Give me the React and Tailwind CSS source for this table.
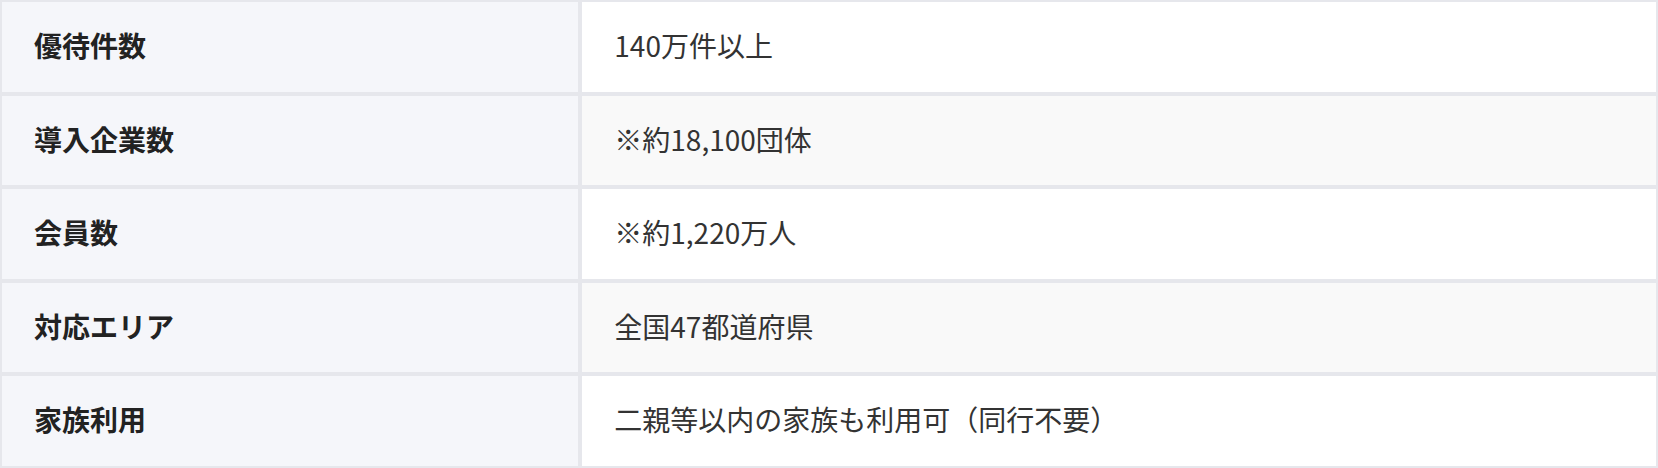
import React from "react";

const rows = [
  { label: "優待件数", value: "140万件以上" },
  { label: "導入企業数", value: "※約18,100団体" },
  { label: "会員数", value: "※約1,220万人" },
  { label: "対応エリア", value: "全国47都道府県" },
  { label: "家族利用", value: "二親等以内の家族も利用可（同行不要）" },
];

const App = () => {
  return (
    <div
      className="w-[1658px] bg-white"
      style={{ fontFamily: '"Noto Sans CJK JP", "Noto Sans", sans-serif' }}
    >
      <table className="w-full border-separate border-spacing-0 table-fixed">
        <tbody>
          {rows.map((row, index) => (
            <tr key={index}>
              <th className="w-[35%] border-2 border-[#e6e7ec] bg-[#f5f6fa] px-8 pt-[21px] pb-[23px] text-left text-[28px] leading-[45.6px] font-bold text-[#222222]">
                {row.label}
              </th>
              <td
                className={
                  index % 2 === 1
                    ? "border-2 border-[#e6e7ec] bg-[#f9f9f9] px-8 pt-[21px] pb-[23px] text-[28px] leading-[45.6px] text-[#333333]"
                    : "border-2 border-[#e6e7ec] bg-white px-8 pt-[21px] pb-[23px] text-[28px] leading-[45.6px] text-[#333333]"
                }
              >
                {row.value}
              </td>
            </tr>
          ))}
        </tbody>
      </table>
    </div>
  );
};

export default App;
